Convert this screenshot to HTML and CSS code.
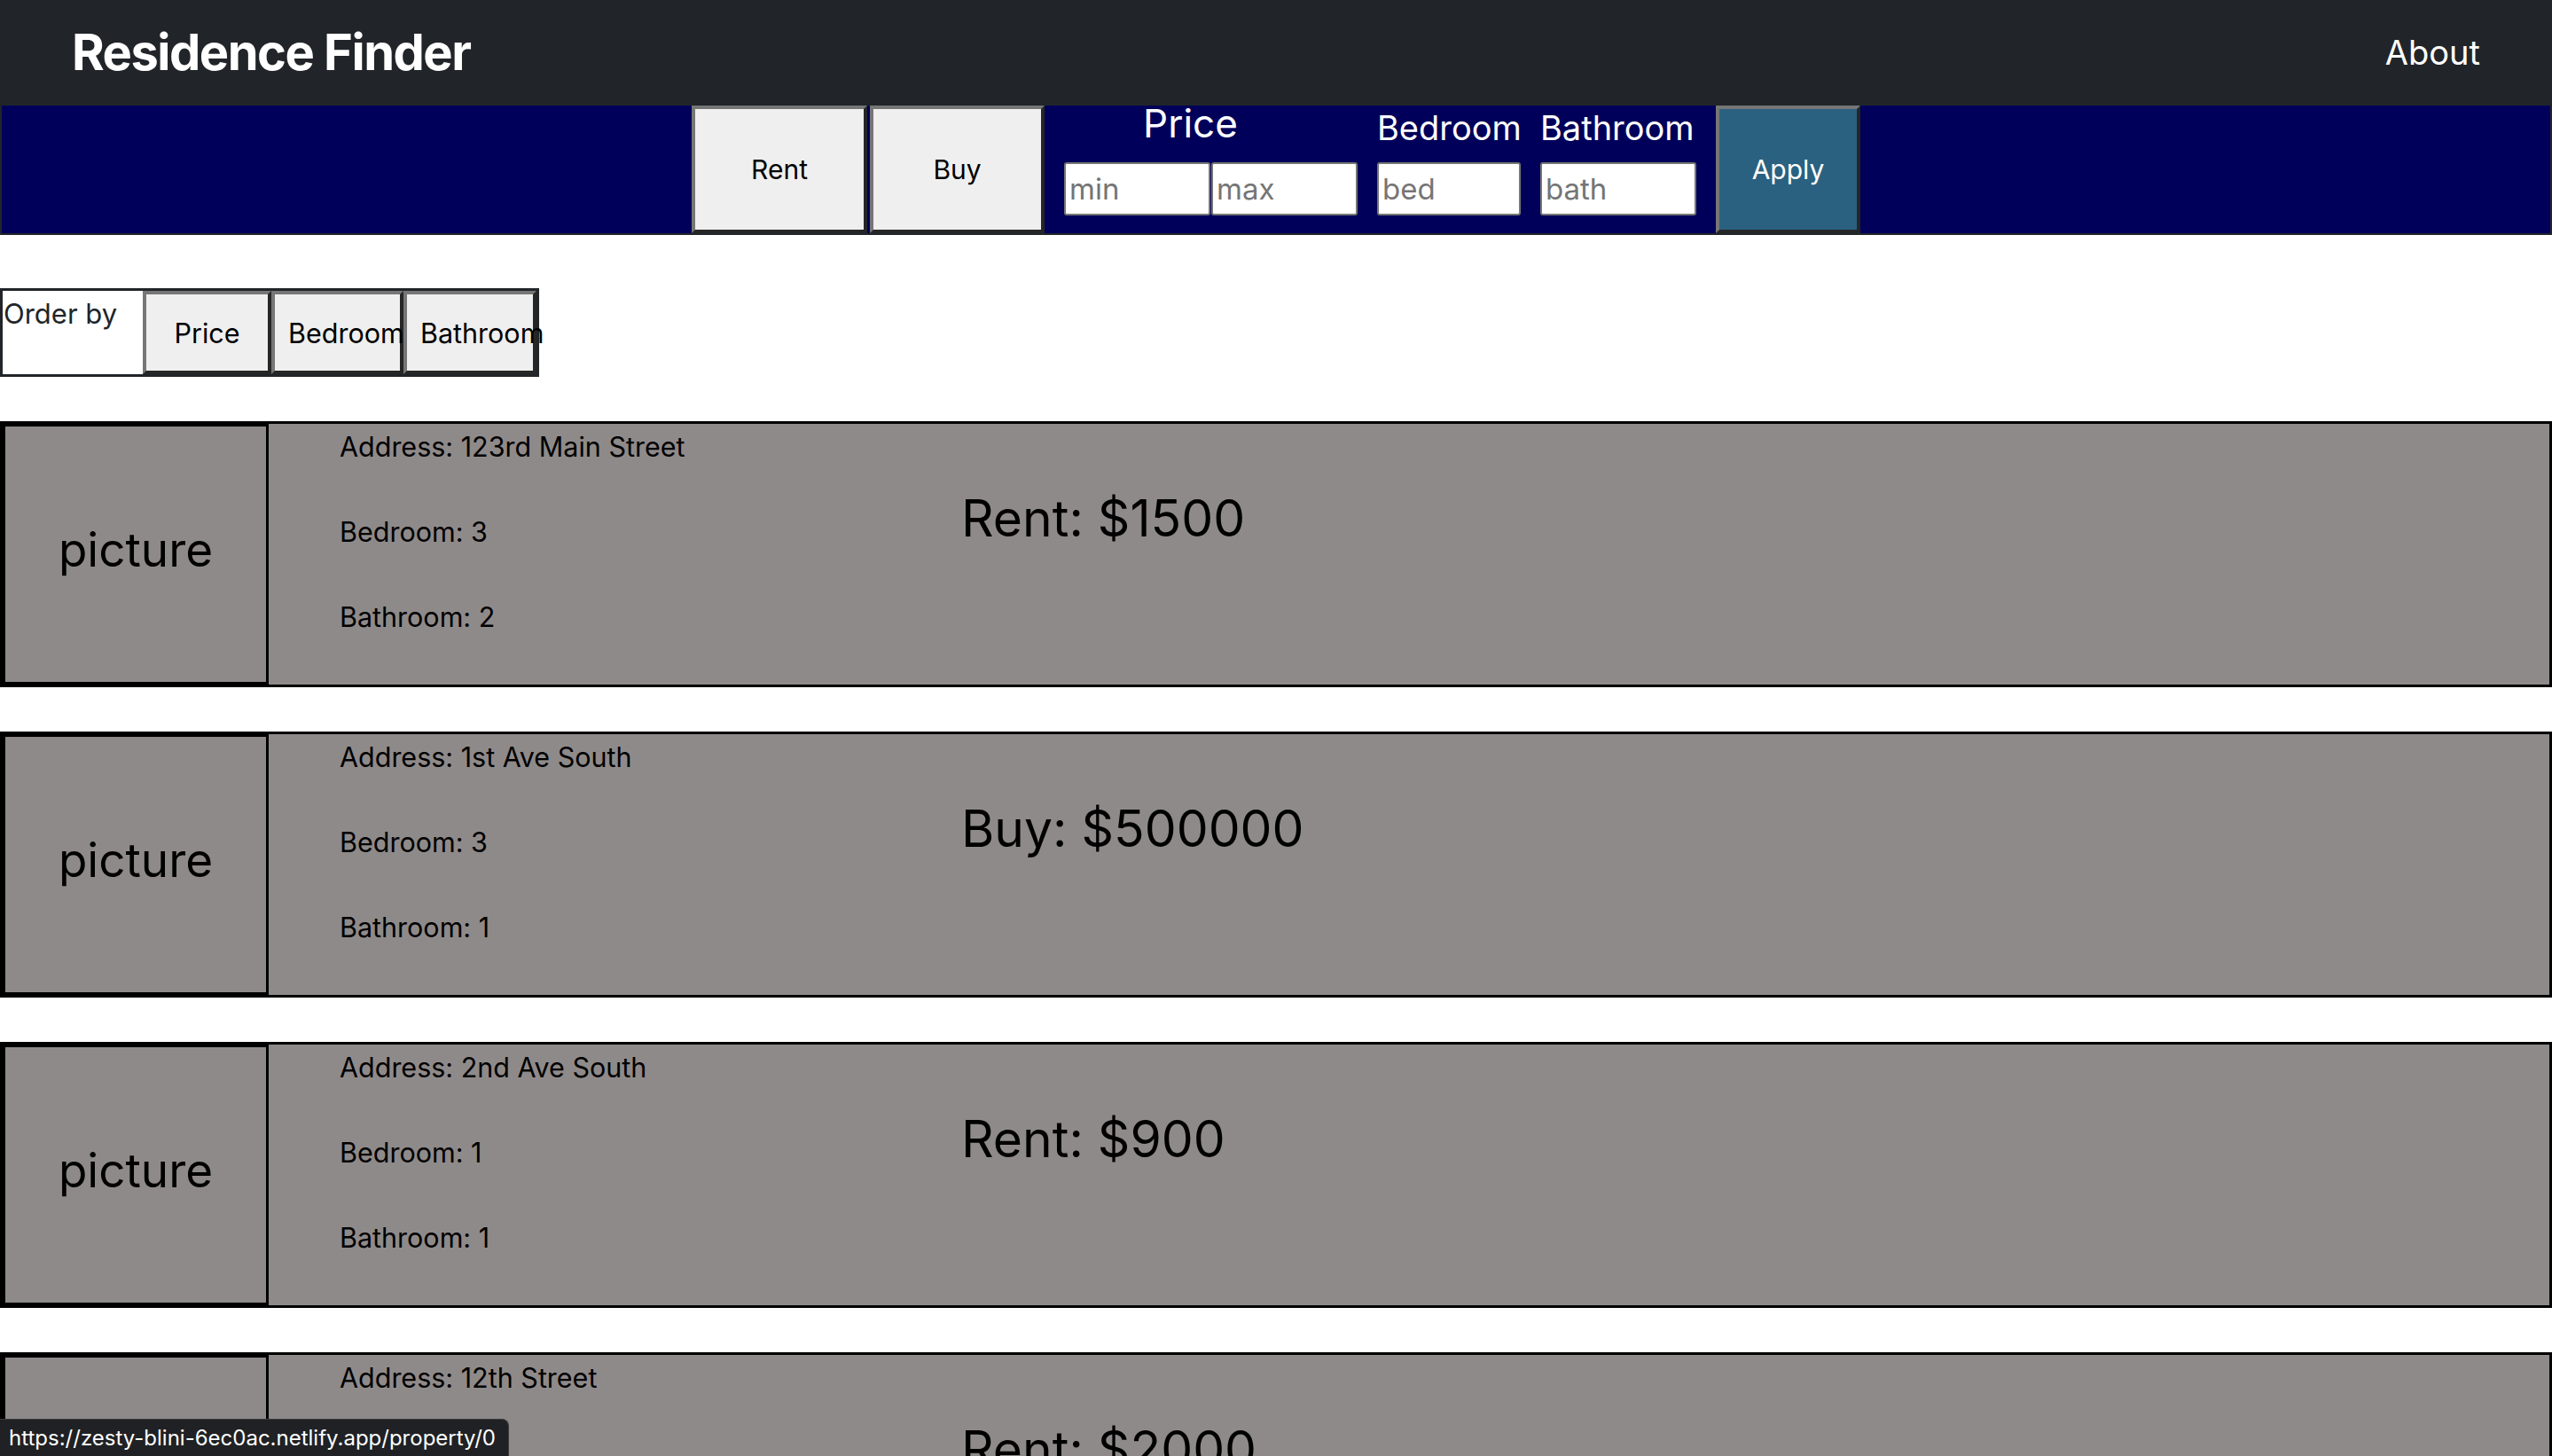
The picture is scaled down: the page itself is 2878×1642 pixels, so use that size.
FILE: index.html
```html
<!DOCTYPE html>
<html lang="en">
<head>
<meta charset="utf-8">
<title>Residence Finder</title>
<link rel="stylesheet" href="styles.css">
</head>
<body>
<nav class="navbar">
  <a class="brand" href="#">Residence Finder</a>
  <a class="nav-link" href="#">About</a>
</nav>

<section class="filter-bar">
  <button class="btn btn-type">Rent</button>
  <button class="btn btn-type btn-buy">Buy</button>
  <div class="filter-fields">
    <div class="group group-price">
      <div class="label label-price">Price</div>
      <div class="price-inputs">
        <input class="field" type="text" placeholder="min">
        <input class="field" type="text" placeholder="max">
      </div>
    </div>
    <div class="group group-bed">
      <div class="label">Bedroom</div>
      <input class="field" type="text" placeholder="bed">
    </div>
    <div class="group group-bath">
      <div class="label">Bathroom</div>
      <input class="field" type="text" placeholder="bath">
    </div>
  </div>
  <button class="btn btn-apply">Apply</button>
</section>

<div class="order-by">
  <div class="order-label">Order by</div>
  <button class="btn btn-order btn-order-price">Price</button>
  <button class="btn btn-order btn-order-bed">Bedroom</button>
  <button class="btn btn-order btn-order-bath">Bathroom</button>
</div>

<main class="listings">
  <a class="card" href="#">
    <div class="pic">picture</div>
    <div class="info">
      <div>Address: 123rd Main Street</div>
      <div>Bedroom: 3</div>
      <div>Bathroom: 2</div>
    </div>
    <div class="cost">Rent: $1500</div>
  </a>
  <a class="card" href="#">
    <div class="pic">picture</div>
    <div class="info">
      <div>Address: 1st Ave South</div>
      <div>Bedroom: 3</div>
      <div>Bathroom: 1</div>
    </div>
    <div class="cost">Buy: $500000</div>
  </a>
  <a class="card" href="#">
    <div class="pic">picture</div>
    <div class="info">
      <div>Address: 2nd Ave South</div>
      <div>Bedroom: 1</div>
      <div>Bathroom: 1</div>
    </div>
    <div class="cost">Rent: $900</div>
  </a>
  <a class="card" href="#">
    <div class="pic">picture</div>
    <div class="info">
      <div>Address: 12th Street</div>
      <div>Bedroom: 2</div>
      <div>Bathroom: 1</div>
    </div>
    <div class="cost">Rent: $2000</div>
  </a>
</main>

<div class="status-bubble">https://zesty-blini-6ec0ac.netlify.app/property/0</div>
</body>
</html>
```

FILE: styles.css
```css
html, body {
  margin: 0;
  padding: 0;
  overflow: hidden;
}

body {
  font-family: "Inter", "Noto Sans", sans-serif;
  font-size: 30px;
  line-height: 1.5;
  color: #000;
  background: #fff;
}

* {
  box-sizing: border-box;
}

/* ---------- navbar ---------- */
.navbar {
  height: 119px;
  background: #212529;
  display: flex;
  align-items: center;
  justify-content: space-between;
  padding: 0 81px;
}

.brand {
  color: #fff;
  text-decoration: none;
  font-weight: 700;
  font-size: 56px;
  line-height: 1.2;
  letter-spacing: -1.5px;
}

.nav-link {
  color: #fff;
  text-decoration: none;
  font-size: 38px;
  line-height: 1.2;
}

/* ---------- buttons ---------- */
.btn {
  font-family: inherit;
  font-size: 30px;
  line-height: 1.2;
  color: #000;
  background: #efefef;
  border-style: solid;
  border-width: 4px;
  border-color: #767676 #262626 #262626 #767676;
  padding: 0;
  margin: 0;
  white-space: nowrap;
  text-align: center;
  cursor: pointer;
}

/* ---------- filter bar ---------- */
.filter-bar {
  background: #00005a;
  border: 2px solid #212529;
  border-top: 0;
  height: 146px;
  display: flex;
  justify-content: center;
  align-items: stretch;
}

.btn-type {
  width: 198px;
  height: 144px;
}

.btn-buy {
  margin-left: 3px;
  width: 197px;
}

.btn-apply {
  width: 163px;
  height: 144px;
  background: #2b6180;
  color: #fff;
}

.filter-fields {
  display: flex;
  gap: 22px;
  padding: 0 22px;
  height: 144px;
}

.group {
  display: flex;
  flex-direction: column;
  justify-content: flex-end;
  padding-bottom: 20px;
}

.label {
  color: #fff;
  font-size: 38px;
  line-height: 1;
  margin-bottom: 20px;
  white-space: nowrap;
}

.label-price {
  font-size: 44px;
  margin-bottom: 22px;
  text-align: center;
  padding-right: 46px;
}

.price-inputs {
  display: flex;
  gap: 1px;
}

.field {
  display: block;
  height: 60px;
  font-family: inherit;
  font-size: 33px;
  padding: 0 4px;
  border: 2px solid #767676;
  border-radius: 3px;
  background: #fff;
  color: #000;
  margin: 0;
}

.field::placeholder {
  color: #757575;
}

.price-inputs .field {
  width: 165px;
}

.group-bed {
  width: 162px;
}

.group-bath {
  width: 176px;
}

.group-bed .field,
.group-bath .field {
  width: 100%;
}

/* ---------- order by ---------- */
.order-by {
  display: flex;
  width: fit-content;
  margin-top: 60px;
  height: 100px;
  border: 3px solid #212529;
}

.order-label {
  width: 158px;
  background: #fff;
  color: #212529;
  font-size: 31px;
  line-height: 1.5;
  padding: 3px 0 0 1px;
}

.btn-order {
  height: 94px;
  padding: 2px 15px 0;
  overflow: visible;
  font-size: 30.5px;
}

.btn-order-price {
  width: 145px;
}

.btn-order-bed {
  width: 149px;
}

.btn-order-bath {
  width: 150px;
}

/* ---------- listings ---------- */
.listings {
  margin-top: 50px;
}

.card {
  display: flex;
  height: 300px;
  border: 3px solid #000;
  background: #8f8a8a;
  color: #000;
  text-decoration: none;
  margin-bottom: 50px;
}

.pic {
  width: 300px;
  flex: none;
  border: 3px solid #000;
  display: flex;
  align-items: center;
  justify-content: center;
  padding-bottom: 8px;
  font-size: 53px;
  line-height: 1.2;
}

.info {
  width: 781px;
  flex: none;
  padding: 3px 0 0 80px;
  display: flex;
  flex-direction: column;
  gap: 50px;
  font-size: 30.5px;
  line-height: 1.5;
}

.cost {
  padding-top: 64px;
  font-size: 57px;
  line-height: 1.5;
}

/* ---------- browser status bubble ---------- */
.status-bubble {
  position: fixed;
  left: 0;
  bottom: 0;
  height: 42px;
  padding: 0 14px 0 10px;
  background: #202124;
  color: #fff;
  font-size: 24px;
  line-height: 42px;
  border-top-right-radius: 8px;
  border: 1px solid #3c3c3c;
  border-left: 0;
  border-bottom: 0;
}
```
